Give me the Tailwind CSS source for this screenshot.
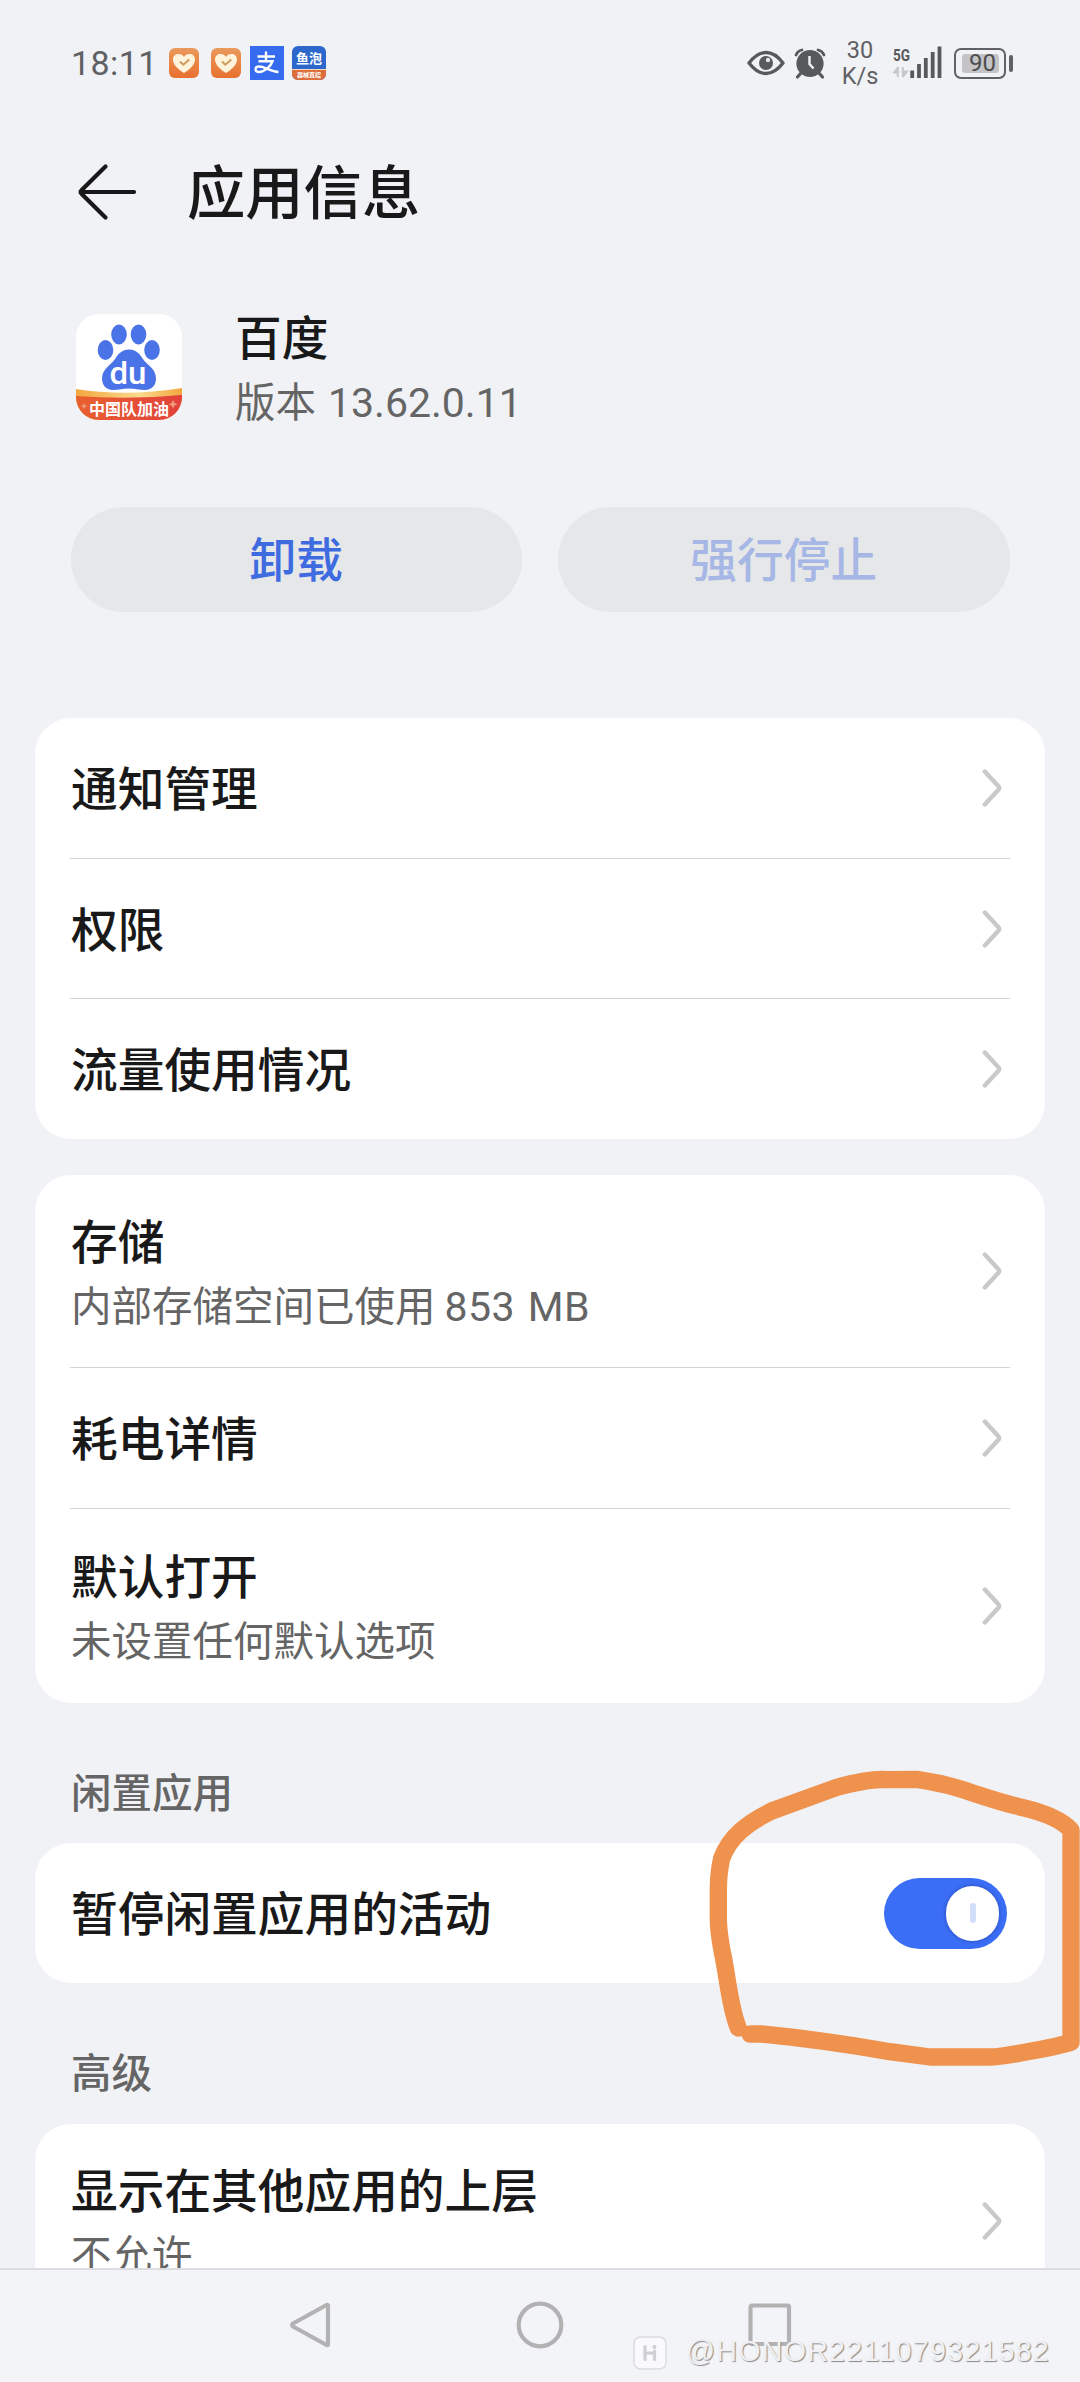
<!DOCTYPE html>
<html lang="zh-CN">
<head>
<meta charset="utf-8">
<title>应用信息</title>
<script src="https://cdn.jsdelivr.net/npm/@tailwindcss/browser@4"></script>
</head>
<body class="relative flex h-[2382px] w-[1080px] flex-col overflow-hidden bg-[#f1f2f6] font-['Noto_Sans_CJK_SC',sans-serif] text-[#191919]">

<svg class="absolute size-0">
  <defs><linearGradient id="og" x1="0" y1="0" x2="0" y2="1"><stop offset="0" stop-color="#ea9a5c"/><stop offset="1" stop-color="#e8702f"/></linearGradient></defs>
  <symbol id="chev" viewBox="0 0 20 38"><path d="M2.8 2.6 L16.4 17.2 Q18 19 16.4 20.8 L2.8 35.4" fill="none" stroke="#c9c9ca" stroke-width="4.4" stroke-linecap="round"/></symbol>
  <symbol id="heart" viewBox="0 0 30 30">
    <rect width="30" height="30" rx="6" fill="url(#og)"/>
    <path d="M15 25 C10 22 4 17 4 11.5 C4 8 6.500 6 9.500 6 C12 6 14 7.200 15 9 C16 7.200 18 6 20.500 6 C23.500 6 26 8 26 11.500 C26 17 20 22 15 25Z" fill="#fff3dc"/>
    <path d="M11 13.500 L14.300 16.700 L20.300 11.500" fill="none" stroke="#cf9a5c" stroke-width="2"/>
  </symbol>
</svg>

<!-- status bar -->
<div class="flex h-[126px] shrink-0 items-center pl-[71px] pr-[67px]">
  <span class="w-[98px] whitespace-nowrap font-[Roboto,sans-serif] text-[34px] leading-none tracking-[0.4px] text-[#606164]">18:11</span>
  <svg class="size-[30px]"><use href="#heart"/></svg>
  <svg class="ml-3 size-[30px]"><use href="#heart"/></svg>
  <div class="ml-[9px] size-[34px] shrink-0 bg-[#346bef]">
    <svg viewBox="0 0 34 34" class="size-[34px]" fill="none" stroke="#fff" stroke-width="2.400"><path d="M7.500 10.500H25M16 5.500V15M8.500 15.300H22.500C21 20 14 26.500 8.500 26C4.500 25.500 4.500 20.500 9 20.500C15 20.500 20 25.500 28.500 26"/></svg>
  </div>
  <div class="ml-2 flex size-[34px] shrink-0 flex-col overflow-hidden rounded-[6px] bg-[#2c68cc]">
    <span class="h-[23px] text-center text-[13px] leading-[23px] font-bold text-white">鱼泡</span>
    <span class="flex h-[11px] items-center justify-center border-t border-[#f5d9c4] bg-[#dd6d3b] text-[6px] leading-none font-bold whitespace-nowrap text-white">器械直招</span>
  </div>
  <svg class="ml-auto h-[26px] w-[38px]" viewBox="0 0 38 26"><path d="M2 13 Q10 2.500 19 2.500 T36 13 Q28 23.500 19 23.500 T2 13Z" fill="none" stroke="#58595b" stroke-width="3.400" stroke-linejoin="round"/><circle cx="19" cy="13" r="7" fill="#58595b"/><circle cx="21" cy="10" r="2.200" fill="#e5e6ea"/></svg>
  <svg class="ml-[9px] h-[31px] w-[32px]" viewBox="0 0 32 31"><g fill="none" stroke="#58595b" stroke-width="3.200" stroke-linecap="round"><path d="M2 7 Q3.500 3 8 2M24 2 Q28.500 3 30 7" stroke-width="2.800"/><path d="M7 25 L3.500 29M25 25 L28.500 29"/></g><circle cx="16" cy="15.500" r="13.600" fill="#58595b"/><path d="M15.500 8 V16 L19.500 20.500" fill="none" stroke="#f1f2f6" stroke-width="2.400"/></svg>
  <div class="ml-[16px] flex w-[36px] flex-col items-center font-[Roboto,sans-serif] text-[23.500px] leading-[26px] text-[#606164]"><span>30</span><span>K/s</span></div>
  <svg class="ml-[15px] h-[34px] w-[50px]" viewBox="0 0 50 34">
    <text x="0" y="15" textLength="17" lengthAdjust="spacingAndGlyphs" class="font-[Roboto,sans-serif] text-[17px] font-bold" fill="#58595b">5G</text>
    <path d="M4.800 31V21.500M5.500 21L1 26.500H5.500M9.800 21V30.500M9.500 31L14 25.500H9.500" stroke="#c6c7ca" stroke-width="2" fill="#c6c7ca"/>
    <path d="M19.200 30.500V27M26 30.500V20.500M32.800 30.500V14.500M39.700 30.500V8.500M46.500 30.500V3" stroke="#58595b" stroke-width="3.800" stroke-linecap="square" transform="translate(0 -.5)"/>
  </svg>
  <div class="ml-[11px] flex h-[31px] w-[52px] items-center justify-center rounded-[7px] border-[2.500px] border-[#606164]">
    <div class="flex h-[19px] w-[37px] items-center justify-center rounded-[3px] bg-[#c4c4c6] pl-[5px] font-[Roboto,sans-serif] text-[24px] leading-none text-[#4c4d50]">90</div>
  </div>
  <div class="ml-[3px] h-[17px] w-1 rounded-[2px] bg-[#606164]"></div>
</div>

<!-- title -->
<div class="flex h-[132px] shrink-0 items-center pl-[77px]">
  <svg class="h-[58px] w-[60px]" viewBox="0 0 60 58" fill="none" stroke="#191919" stroke-width="4.200" stroke-linecap="round" stroke-linejoin="round"><path d="M57 29H3.500M28.500 3.500L4.500 27.200Q2.700 29 4.500 30.800L28.500 54.500"/></svg>
  <h1 class="ml-[50px] pb-1.5 text-[58.300px] leading-[70px] font-medium">应用信息</h1>
</div>

<!-- app -->
<div class="flex h-[217px] shrink-0 items-center pl-[76px]">
  <svg class="size-[106px]" viewBox="0 0 106 106">
    <defs><clipPath id="ic"><rect width="106" height="106" rx="23"/></clipPath><linearGradient id="rd"><stop offset="0" stop-color="#e8602f"/><stop offset="1" stop-color="#e2413c"/></linearGradient><linearGradient id="yl"><stop offset="0" stop-color="#f3a73f"/><stop offset=".6" stop-color="#fbd98c"/><stop offset="1" stop-color="#f4a640"/></linearGradient></defs>
    <g clip-path="url(#ic)">
      <rect width="106" height="106" fill="#fff"/>
      <path d="M0 75 Q50 83 106 74 V106 H0Z" fill="url(#yl)"/>
      <path d="M0 82 Q53 86 106 81 V106 H0Z" fill="url(#rd)"/>
      <g fill="#4a73e8"><ellipse cx="43" cy="20.500" rx="7.800" ry="10"/><ellipse cx="62.500" cy="20.500" rx="7.800" ry="10"/><ellipse cx="29.500" cy="36" rx="7.800" ry="10"/><ellipse cx="76" cy="36" rx="7.800" ry="10"/>
      <path d="M53 35.500C60 35.500 64 40 67 45C71 51 80 54.500 80 64.500C80 72 75 76 69 76C63 76 59 74.500 53 74.500C47 74.500 43 76 37 76C30 76 26 71 26 64.500C26 55 35 51 39 45C42 40 46 35.500 53 35.500Z"/></g>
      <text x="33.500" y="70" textLength="37" lengthAdjust="spacingAndGlyphs" fill="#fff" class="font-[Roboto,sans-serif] text-[31px] font-medium">du</text>
      <text x="13" y="100.500" textLength="80" fill="#fff" class="text-[16px] font-bold">中国队加油</text>
      <path d="M97 86l1.500 3 3 1.200-3 1.300-1.500 3-1.500-3-3-1.300 3-1.200zM8 89l1 2 2 1-2 1-1 2-1-2-2-1 2-1z" fill="#f39a7c"/>
    </g>
  </svg>
  <div class="ml-[53px] flex flex-col">
    <span class="text-[46.700px] leading-[65px] font-medium">百度</span>
    <span class="flex h-[65px] items-baseline text-[40.500px] leading-[65px] text-[#656565]">版本<span class="ml-3 font-[Roboto,sans-serif] text-[41px]">13.62.0.11</span></span>
  </div>
</div>

<!-- actions -->
<div class="mt-8 grid h-[105px] shrink-0 grid-cols-2 gap-9 px-[70.500px] text-[46.700px] font-medium">
  <button class="rounded-full bg-[#e6e7e9] pb-1 leading-none text-[#3e6be0]">卸载</button>
  <button class="rounded-full bg-[#e6e7e9] pb-1 leading-none text-[#a6b7e6]">强行停止</button>
</div>

<!-- group 1 -->
<div class="mx-[35px] mt-[106px] flex h-[421px] shrink-0 flex-col rounded-[36px] bg-white px-[35px] text-[46.700px] font-medium">
  <div class="flex flex-1 items-center justify-between border-b-[1.500px] border-[#d3d3d4] pr-2"><span class="pb-1 pl-px leading-[60px]">通知管理</span><svg class="h-[38px] w-5"><use href="#chev"/></svg></div>
  <div class="flex flex-1 items-center justify-between border-b-[1.500px] border-[#d3d3d4] pr-2"><span class="pb-1 pl-px leading-[60px]">权限</span><svg class="h-[38px] w-5"><use href="#chev"/></svg></div>
  <div class="flex flex-1 items-center justify-between pr-2"><span class="pb-1 pl-px leading-[60px]">流量使用情况</span><svg class="h-[38px] w-5"><use href="#chev"/></svg></div>
</div>

<!-- group 2 -->
<div class="mx-[35px] mt-9 flex h-[528px] shrink-0 flex-col rounded-[36px] bg-white px-[35px] text-[46.700px] font-medium">
  <div class="flex h-[193px] items-center justify-between border-b-[1.500px] border-[#d3d3d4] pr-2">
    <div class="flex flex-col pl-px"><span class="leading-[65px]">存储</span><span class="flex h-[65px] items-baseline text-[40.500px] leading-[65px] font-normal text-[#656565]">内部存储空间已使用<span class="ml-[9px] font-[Roboto,sans-serif] text-[41px] tracking-[0.500px] [word-spacing:2px]">853 MB</span></span></div>
    <svg class="h-[38px] w-5"><use href="#chev"/></svg>
  </div>
  <div class="flex h-[141px] items-center justify-between border-b-[1.500px] border-[#d3d3d4] pr-2"><span class="pb-1 pl-px leading-[60px]">耗电详情</span><svg class="h-[38px] w-5"><use href="#chev"/></svg></div>
  <div class="flex h-[194px] items-center justify-between pr-2">
    <div class="flex flex-col pl-px"><span class="leading-[65px]">默认打开</span><span class="text-[40.500px] leading-[65px] font-normal text-[#656565]">未设置任何默认选项</span></div>
    <svg class="h-[38px] w-5"><use href="#chev"/></svg>
  </div>
</div>

<div class="h-[140px] shrink-0 pt-[58px] pl-[71px] text-[40.500px] leading-[60px] font-medium text-[#656565]">闲置应用</div>

<div class="mx-[35px] flex h-[140px] shrink-0 items-center justify-between rounded-[36px] bg-white pr-[38px] pl-[36px]">
  <span class="pb-1 text-[46.700px] leading-[60px] font-medium">暂停闲置应用的活动</span>
  <div class="flex h-[71px] w-[123px] items-center justify-end rounded-full bg-[#3b6ef6] pr-2">
    <div class="flex h-[55px] w-[53px] items-center justify-center rounded-full bg-white shadow-[0_0_4px_rgba(0,0,60,0.35)]"><div class="h-5 w-1.5 rounded-full bg-[#d3defb]"></div></div>
  </div>
</div>

<div class="h-[141px] shrink-0 pt-[58px] pl-[71px] text-[40.500px] leading-[60px] font-medium text-[#656565]">高级</div>

<div class="mx-[35px] h-[144px] shrink-0 overflow-hidden rounded-t-[36px] bg-white px-[35px]">
  <div class="flex h-[194px] items-center justify-between pr-2">
    <div class="flex flex-col pb-0.5 pl-px"><span class="text-[46.700px] leading-[65px] font-medium">显示在其他应用的上层</span><span class="text-[40.500px] leading-[65px] text-[#656565]">不允许</span></div>
    <svg class="h-[38px] w-5"><use href="#chev"/></svg>
  </div>
</div>

<!-- navigation bar -->
<div class="flex h-[114px] shrink-0 items-center justify-center gap-[182px] border-t-2 border-[#dcdde0] bg-[#f3f4f8] pb-0.5">
  <svg class="size-[48px]" viewBox="0 0 48 48" fill="none" stroke="#b2b2b3" stroke-width="4.200" stroke-linejoin="round"><path d="M42 4.500V43.500Q41.500 44.500 40.500 44L7 25.500Q5.500 24 7 22.500L40.500 4Q41.500 3.500 42 4.500Z"/></svg>
  <svg class="size-[48px]" viewBox="0 0 48 48" fill="none" stroke="#b2b2b3" stroke-width="4.200"><circle cx="24" cy="24" r="21.300"/></svg>
  <svg class="size-[48px]" viewBox="0 0 48 48" fill="none" stroke="#b2b2b3" stroke-width="4.200"><rect x="4.500" y="4.500" width="38.500" height="38.500" rx="1.500"/></svg>
</div>

<!-- hand-drawn marker -->
<svg class="absolute top-[1740px] left-[690px] h-[350px] w-[390px]" viewBox="0 0 1170 1050" fill="none" stroke="#ef924e" stroke-width="52" stroke-linecap="round" stroke-linejoin="round"><path d="M145 864 C118 800 112 700 96 632 Q85 570 85 540 V450 Q85 400 95 355 C120 290 170 250 245 213 L440 142 Q540 115 590 119 L680 118 Q770 130 860 163 Q940 190 1000 203 Q1105 228 1143 270 V907 Q1110 918 1020 934 Q930 951 900 951 H720 L600 935 Q400 900 215 882 H180"/></svg>

<!-- watermark -->
<div class="absolute top-[2334px] left-[633px] flex h-[38px] items-center">
  <svg class="size-[34px]" viewBox="0 0 34 34"><rect x="1" y="1" width="32" height="32" rx="6.500" fill="#fafafc" stroke="#dcdce0" stroke-width="1.500"/><path d="M12 10.500V23.500M12 19.500Q12 17 15 17H18Q21.500 17 21.500 19V23.500M21.500 15V18" fill="none" stroke="#cfcfd4" stroke-width="3.200" stroke-linecap="round"/><circle cx="21.500" cy="11" r="2" fill="#cfcfd4"/></svg>
  <span class="ml-[19px] pb-[3px] whitespace-nowrap font-['Liberation_Sans',sans-serif] text-[28.700px] leading-none tracking-[1.200px] text-[#f0f0f2] [text-shadow:1px_1px_1px_#888]">@HONOR2211079321582</span>
</div>
</body>
</html>
